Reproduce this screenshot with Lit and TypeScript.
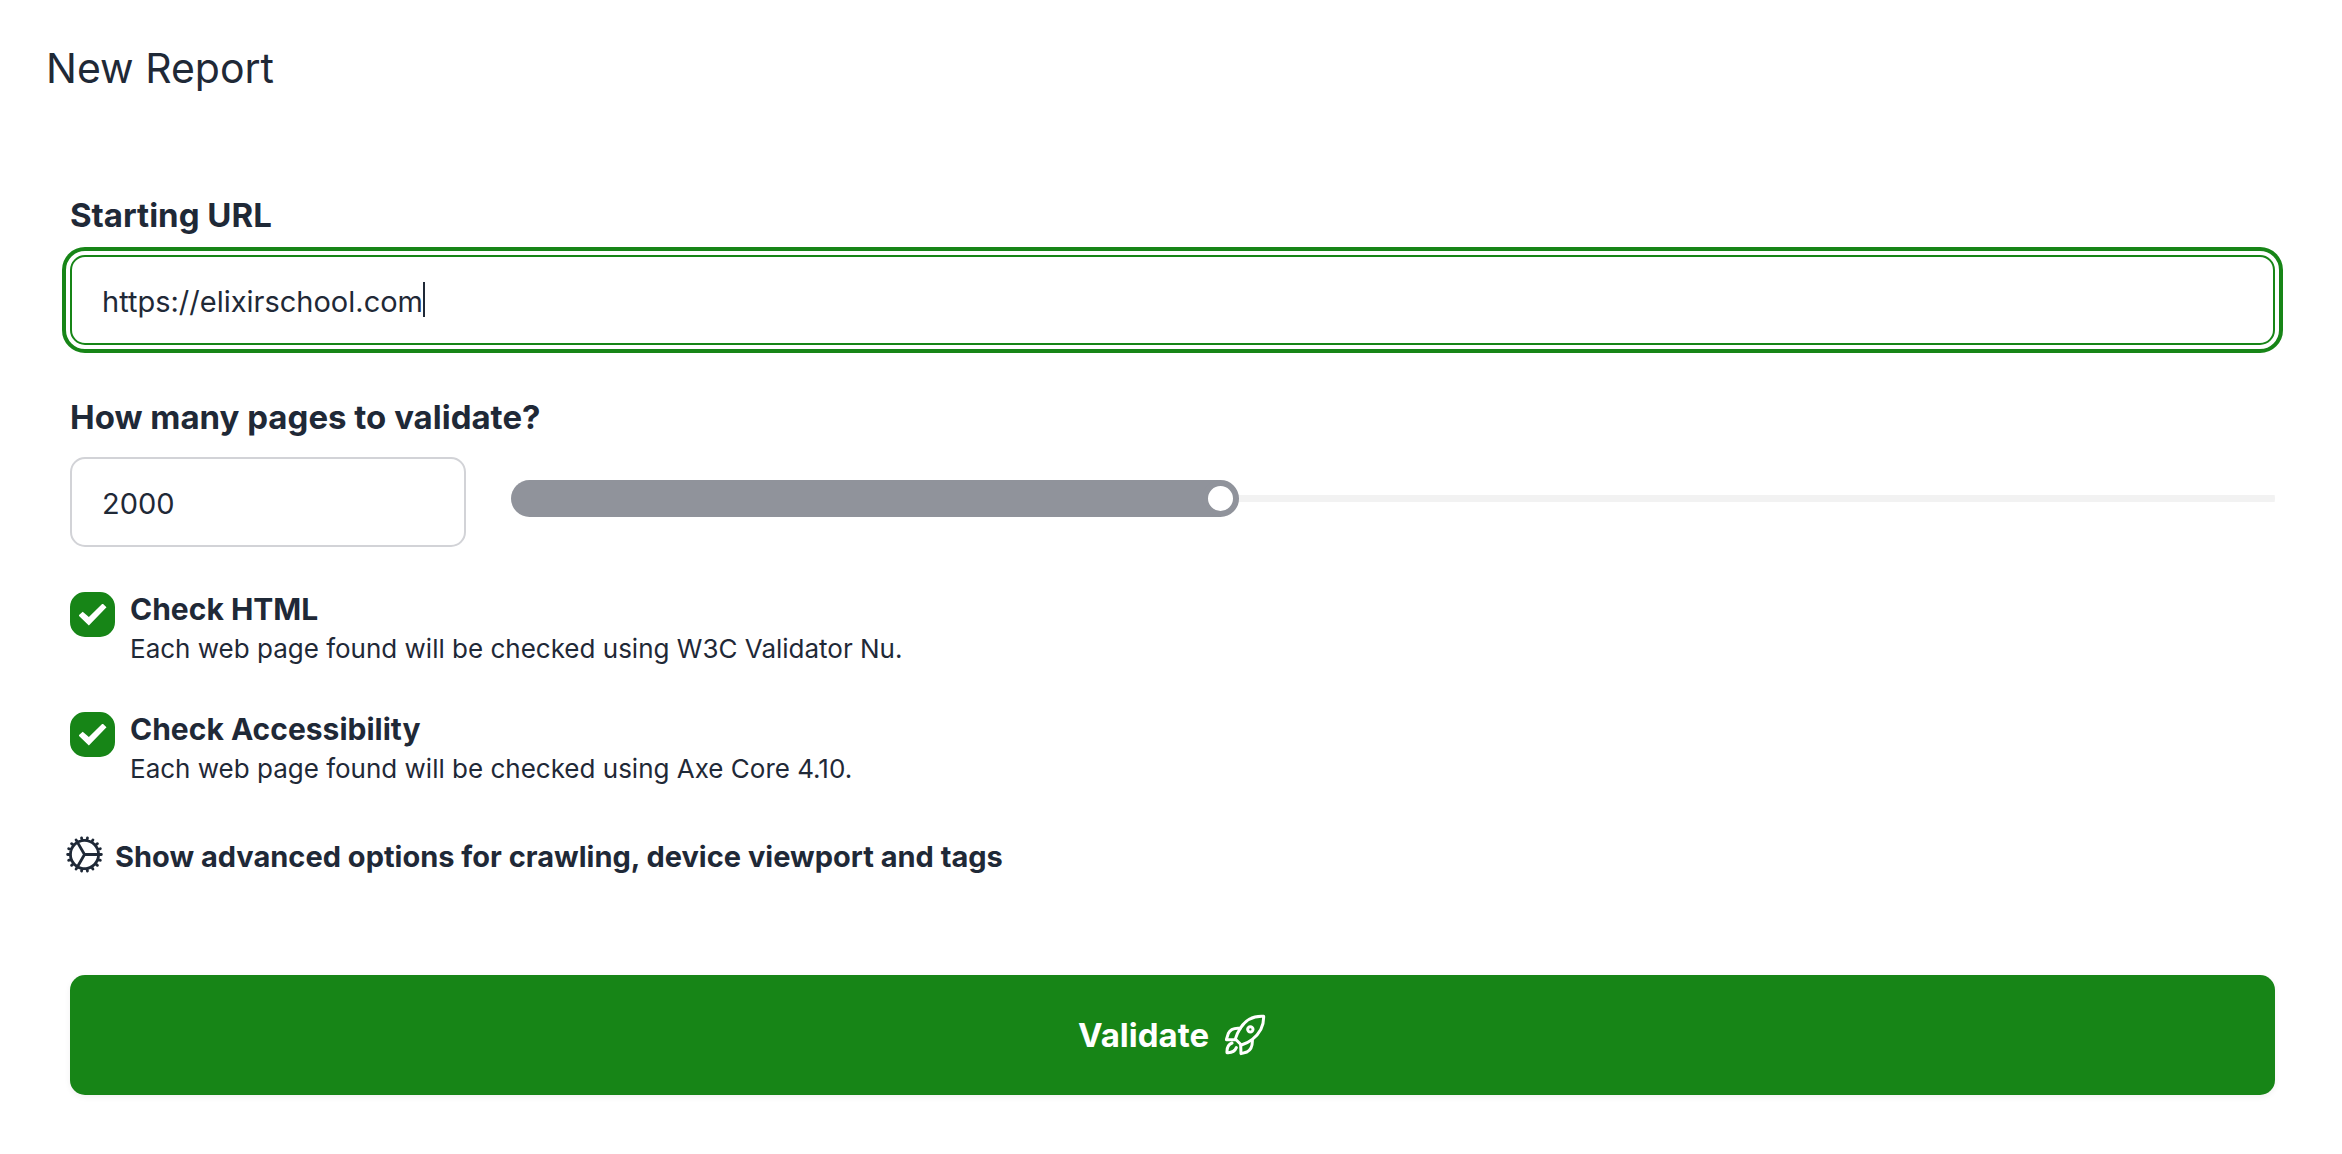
import { LitElement, html, css } from "lit";
import { customElement, state } from "lit/decorators.js";

interface CheckOption {
  id: string;
  title: string;
  hint: string;
  checked: boolean;
}

@customElement("app-root")
export class AppRoot extends LitElement {
  @state() private pages = 2000;
  @state() private checks: CheckOption[] = [
    {
      id: "check-html",
      title: "Check HTML",
      hint: "Each web page found will be checked using W3C Validator Nu.",
      checked: true,
    },
    {
      id: "check-a11y",
      title: "Check Accessibility",
      hint: "Each web page found will be checked using Axe Core 4.10.",
      checked: true,
    },
  ];

  static styles = css`
    :host {
      --green: #178517;
      --ink: #1f2937;
      --range: #90939b;
      display: block;
      box-sizing: border-box;
      min-height: 100vh;
      padding: 40px 67px 59px 46px;
      background: #fff;
      color: var(--ink);
      font-family: Inter, "Liberation Sans", sans-serif;
    }
    *,
    *::before {
      box-sizing: border-box;
    }
    h1 {
      margin: 0;
      font-size: 41px;
      line-height: 56px;
      font-weight: 400;
    }
    form {
      display: flex;
      flex-direction: column;
      margin: 90px 0 0 24px;
    }
    .label {
      display: block;
      font-size: 33px;
      line-height: 58px;
      font-weight: 700;
    }
    .box {
      display: block;
      width: 100%;
      height: 90px;
      padding: 2px 30px 0;
      border: 2px solid #d2d3d7;
      border-radius: 15px;
      background: #fff;
      color: inherit;
      font: inherit;
      font-size: 29px;
      outline: none;
      appearance: textfield;
    }
    .url {
      position: relative;
      margin: 11px 0 43px;
    }
    .url .box {
      border-color: var(--green);
      outline: 4px solid var(--green);
      outline-offset: 4px;
      caret-color: transparent;
    }
    .caret {
      position: absolute;
      top: 27px;
      left: 353px;
      width: 2px;
      height: 35px;
      background: var(--ink);
    }
    .pages {
      display: grid;
      grid-template-columns: 396px 1fr;
      column-gap: 45px;
      margin: 11px 0 45px;
    }
    .range {
      appearance: none;
      width: 100%;
      height: 37px;
      margin: 23px 0 0;
      overflow: hidden;
      border-radius: 19px;
      background: linear-gradient(#f2f2f2, #f2f2f2) center / 100% 7px no-repeat;
    }
    .range::-webkit-slider-thumb {
      appearance: none;
      width: 37px;
      height: 37px;
      border: 6px solid var(--range);
      border-radius: 50%;
      background: #fff;
      box-shadow: -2018px 0 0 2000px var(--range);
    }
    .check {
      display: grid;
      grid-template-columns: 45px 1fr;
      column-gap: 15px;
      margin-bottom: 41px;
    }
    .tick {
      appearance: none;
      display: grid;
      place-items: center;
      width: 45px;
      height: 45px;
      margin: 0;
      border-radius: 15px;
      border: 2px solid #d2d3d7;
    }
    .tick:checked {
      border-color: var(--green);
      background: var(--green);
    }
    .tick:checked::before {
      content: "";
      width: 28px;
      height: 22px;
      background: #fff;
      clip-path: polygon(0 55%, 15% 37%, 37% 61%, 86% 0, 100% 17%, 37% 100%);
    }
    .title {
      display: block;
      font-size: 30px;
      line-height: 34px;
      font-weight: 700;
    }
    .hint {
      margin: 0;
      font-size: 26px;
      line-height: 45px;
    }
    .advanced {
      display: flex;
      align-items: center;
      align-self: flex-start;
      gap: 8px;
      margin: 0 0 0 -8px;
      padding: 0;
      border: 0;
      background: none;
      color: inherit;
      font: inherit;
      font-size: 29px;
      line-height: 41px;
      font-weight: 700;
    }
    .advanced span {
      padding-top: 4px;
    }
    .cog {
      width: 45px;
      height: 45px;
    }
    .submit {
      display: flex;
      align-items: center;
      justify-content: center;
      gap: 16px;
      height: 120px;
      margin-top: 98px;
      border: 0;
      border-radius: 15px;
      background: var(--green);
      box-shadow: 0 2px 6px rgba(0, 0, 0, 0.06);
      color: #fff;
      font: inherit;
      font-size: 33px;
      font-weight: 700;
    }
    .rocket {
      width: 42px;
      height: 42px;
    }
  `;

  private setPages(e: Event) {
    this.pages = Number((e.target as HTMLInputElement).value);
  }

  private renderCheck(c: CheckOption) {
    return html`
      <div class="check">
        <input class="tick" type="checkbox" id=${c.id} .checked=${c.checked} aria-describedby="${c.id}-hint" />
        <div>
          <label class="title" for=${c.id}>${c.title}</label>
          <p class="hint" id="${c.id}-hint">${c.hint}</p>
        </div>
      </div>
    `;
  }

  render() {
    return html`
      <h1>New Report</h1>
      <form @submit=${(e: Event) => e.preventDefault()}>
        <label class="label" for="url">Starting URL</label>
        <div class="url">
          <input class="box" id="url" type="text" value="https://elixirschool.com" />
          <span class="caret"></span>
        </div>

        <label class="label" id="pages-label" for="pages">How many pages to validate?</label>
        <div class="pages">
          <input class="box" id="pages" type="number" .value=${String(this.pages)} @input=${this.setPages} />
          <input
            class="range"
            type="range"
            min="0"
            max="5000"
            aria-labelledby="pages-label"
            .value=${String(this.pages)}
            @input=${this.setPages}
          />
        </div>

        ${this.checks.map((c) => this.renderCheck(c))}

        <button class="advanced" type="button">
          <svg class="cog" viewBox="0 0 24 24" fill="none" stroke="currentColor" stroke-width="1.5" stroke-linecap="round" stroke-linejoin="round" aria-hidden="true">
            <path d="M4.5 12a7.5 7.5 0 0 0 15 0m-15 0a7.5 7.5 0 1 1 15 0m-15 0H3m16.5 0H21m-1.5 0H12m-8.457 3.077 1.41-.513m14.095-5.13 1.41-.513M5.106 17.785l1.15-.964m11.49-9.642 1.149-.964M7.501 19.795l.75-1.3m7.5-12.99.75-1.3m-6.063 16.658.26-1.477m2.605-14.772.26-1.477m0 17.726-.26-1.477M10.698 4.614l-.26-1.477M16.5 19.794l-.75-1.299M7.5 4.205 12 12m6.894 5.785-1.149-.964M6.256 7.178l-1.15-.964m15.352 8.864-1.41-.513M4.954 9.435l-1.41-.514M12.002 12l-3.75 6.495" />
          </svg>
          <span>Show advanced options for crawling, device viewport and tags</span>
        </button>

        <button class="submit" type="submit">
          Validate
          <svg class="rocket" viewBox="4 0 126 126" fill="none" stroke="currentColor" stroke-width="9" stroke-linecap="round" stroke-linejoin="round" aria-hidden="true">
            <path d="M120 7C88 5 64 20 50 43C43 54 38 63 35 75L53 93C66 89 76 84 86 76C107 60 121 38 120 7Z" />
            <circle cx="80" cy="46" r="8" />
            <path d="M50 43C30 41 19 47 14 58L8 77L35 77M86 78C87 98 82 108 70 114L52 119L51 93" />
            <path d="M25 87C15 91 9 100 10 116C25 117 34 111 38 101" />
          </svg>
        </button>
      </form>
    `;
  }
}
